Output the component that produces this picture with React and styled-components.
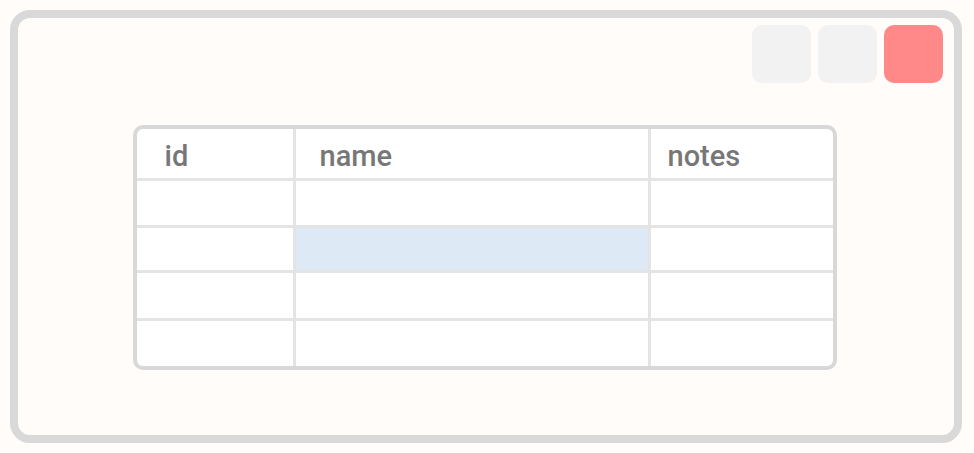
import React from 'react';
import styled, { createGlobalStyle } from 'styled-components';

const Global = createGlobalStyle`
  html, body {
    margin: 0;
    background: #fffcf9;
  }
  body {
    font-family: Roboto, "Noto Sans", sans-serif;
  }
`;

const columns = [
  { key: 'id', width: 156, pad: 28 },
  { key: 'name', width: 352, pad: 24 },
  { key: 'notes', width: 182, pad: 17 },
];

const rowHeights = [44, 42, 45, 45];

const App = () => {
  return (
    <>
      <Global />
      <Frame>
        <Toolbar>
          <WinButton />
          <WinButton />
          <WinButton $close />
        </Toolbar>
        <Table>
          {columns.map((c) => (
            <HeadCell key={c.key} $pad={c.pad}>{c.key}</HeadCell>
          ))}
          {rowHeights.map((h, r) =>
            columns.map((c, ci) => (
              <Cell key={r + c.key} $h={h} $selected={r === 1 && ci === 1} />
            ))
          )}
        </Table>
      </Frame>
    </>
  );
};

const Frame = styled.div`
  margin: 10px;
  width: 952px;
  height: 433px;
  box-sizing: border-box;
  border: 8px solid #d9d9d9;
  border-radius: 20px;
  background: #fffcf9;
  padding: 7px 11px 0 0;
  display: flex;
  flex-direction: column;
  align-items: center;
`;

const Toolbar = styled.div`
  align-self: stretch;
  display: flex;
  justify-content: flex-end;
  gap: 7px;
`;

const WinButton = styled.div`
  width: 59px;
  height: 58px;
  border-radius: 10px;
  background: ${(p) => (p.$close ? '#ff8888' : '#f2f2f2')};
`;

const Table = styled.div`
  margin-top: 42px;
  margin-left: 8px;
  display: grid;
  grid-template-columns: ${columns.map((c) => c.width + 'px').join(' ')};
  gap: 3px;
  background: #e4e4e4;
  border: 4px solid #d8d8d8;
  border-radius: 10px;
  overflow: hidden;
`;

const HeadCell = styled.div`
  height: 49px;
  box-sizing: border-box;
  background: #fff;
  padding: 5px 0 0 ${(p) => p.$pad}px;
  font-size: 29px;
  font-weight: 500;
  color: #777;
  line-height: 44px;
`;

const Cell = styled.div`
  height: ${(p) => p.$h}px;
  background: ${(p) => (p.$selected ? '#dde9f5' : '#fff')};
`;

export default App;
